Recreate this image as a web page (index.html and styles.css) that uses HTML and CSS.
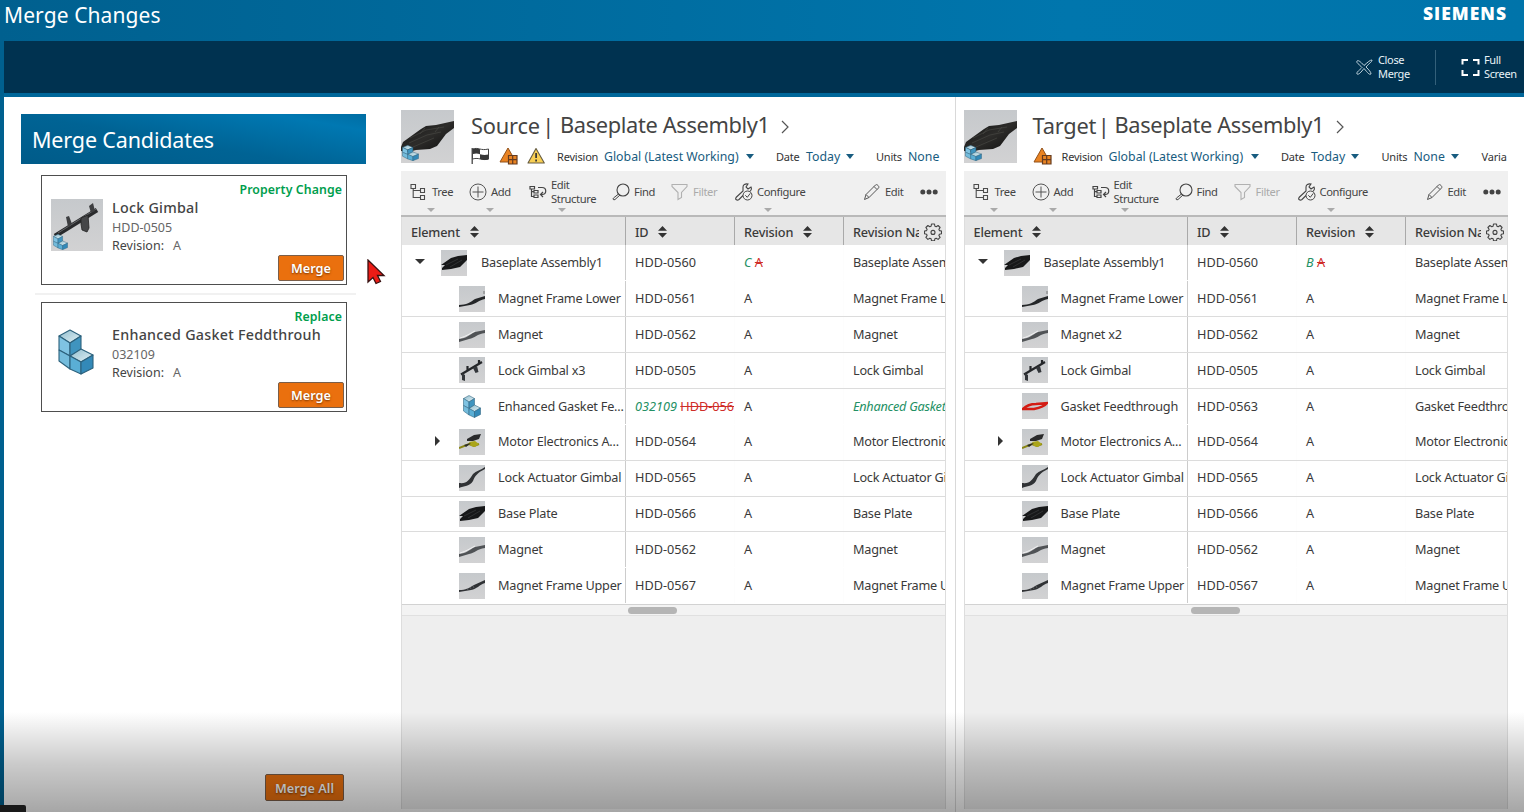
FILE: index.html
```html
<!DOCTYPE html>
<html lang="en">
<head>
<meta charset="utf-8">
<title>Merge Changes</title>
<link rel="stylesheet" href="styles.css">
</head>
<body>
<svg class="defs" width="0" height="0">
  <defs>
    <linearGradient id="ltop" x1="0" y1="0" x2="1" y2="1"><stop offset="0" stop-color="#8fbccd"/><stop offset="1" stop-color="#e3f2f6"/></linearGradient>
    <linearGradient id="plate" x1="0" y1="0" x2="1" y2="1"><stop offset="0" stop-color="#111"/><stop offset=".5" stop-color="#2d2c2a"/><stop offset="1" stop-color="#0c0c0c"/></linearGradient>
    <linearGradient id="shade" x1="0" y1="0" x2="0" y2="1"><stop offset="0" stop-color="#c6c9cc"/><stop offset="1" stop-color="#d2d2d3"/></linearGradient>
  </defs>
  <symbol id="cubes" viewBox="0 0 36 46"><g stroke="#2c617c" stroke-width="1.1" stroke-linejoin="round"><path fill="url(#ltop)" d="M1 7 12 1l11 6-11 7z"/><path fill="#7fc3e2" d="M1 7l11 7v13L1 21z"/><path fill="#3f94bf" d="M23 7l-11 7v13l11-6z"/><path fill="#74bcdc" d="M1 21l11 6v13L1 32z"/><path fill="url(#ltop)" d="M12 27l11-7 12 6-12 7z"/><path fill="#5aaed5" d="M12 27l11 6v12L12 40z"/><path fill="#3389b8" d="M35 26l-12 7v12l12-6z"/></g></symbol>
  <symbol id="plate-lg" viewBox="0 0 53 53"><path fill="url(#shade)" d="M0 0h53v53H0z"/><path fill="url(#plate)" d="M0 37 2 32 20 19 25 16l10-1 18-4v7l-8 6-9 12-7 3-14 1-8 2-7-1z"/><path d="M9 28l16-8 18-3M8 33l18-8 14-3M12 37l21-9M24 18l-5 6m19-7-4 5" stroke="#4b4b47" stroke-width=".6" fill="none"/><svg x="1" y="35" width="17" height="16" viewBox="0 0 36 46" preserveAspectRatio="none"><g class="mini"><use href="#cubes" width="36" height="46"/></g></svg></symbol>
  <symbol id="plate-sm" viewBox="0 0 26 26"><path fill="url(#shade)" d="M0 0h26v26H0z"/><path fill="#171819" d="M0 15 10 8l7-2 9-1v5l-7 7-9 2-9 1v-2l3-3z"/><path d="M5 15l12-6M9 17l12-7" stroke="#3b3c3e" stroke-width=".7"/></symbol>
  <symbol id="frame" viewBox="0 0 26 26"><path fill="url(#shade)" d="M0 0h26v26H0z"/><path fill="#242628" d="M0 19c7 0 12-3 16-6l10-3v3c-6 1-9 5-15 6l-11 2z"/><path d="M25 8V5" stroke="#555" stroke-width=".7"/></symbol>
  <symbol id="frame-up" viewBox="0 0 26 26"><path fill="url(#shade)" d="M0 0h26v26H0z"/><path fill="#303235" d="M0 17c7 0 10-2 15-5l11-5v3c-6 2-8 6-14 7l-12 2z"/><path d="M8 15l1 2m2-3l1 2m2-3l1 2" stroke="#77797b" stroke-width=".6"/></symbol>
  <symbol id="magnet" viewBox="0 0 26 26"><path fill="url(#shade)" d="M0 0h26v26H0z"/><path fill="#505356" d="M0 17c8-1 10-4 16-7l10-2v3c-8 1-10 5-16 6l-10 3z"/><path d="M1 16c7-2 9-4 15-7" stroke="#fff" stroke-width=".7" fill="none"/></symbol>
  <symbol id="gimbal" viewBox="0 0 26 26"><path fill="url(#shade)" d="M0 0h26v26H0z"/><g fill="none" stroke="#25272a" stroke-width="2.200"><path d="M2 17.500 23 5M8.500 14V9M20 6V3"/></g><path fill="#33363a" d="M3 16l3 2v6l-3-1zM14 11l4-2 1.500 6-3 1z"/></symbol>
  <symbol id="gimbal-lg" viewBox="0 0 52 52"><path fill="url(#shade)" d="M0 0h52v52H0z"/><path d="M4 37 46 11" stroke="#292a2c" stroke-width="4.500"/><path d="M7 34 45 10" stroke="#66686a" stroke-width="1"/><path fill="#3d3e40" d="M15 18l3-1 3 8-4 3zM38 7l4-3 2 8-4 2z"/><path fill="#454648" stroke="#222" stroke-width=".8" d="M30 19l7-3 1 13-2 4-5-2-1-6z"/><svg x="2" y="35" width="15" height="16" viewBox="0 0 36 46" preserveAspectRatio="none"><g class="mini"><use href="#cubes" width="36" height="46"/></g></svg></symbol>
  <symbol id="motor" viewBox="0 0 26 26"><path fill="url(#shade)" d="M0 0h26v26H0z"/><path d="M0 19l10-4 5 2 5-2" stroke="#898514" stroke-width="2" fill="none"/><path fill="#aaa51a" d="M10 13l6-1 4 3-4 3-4-1z"/><path fill="#292a2b" d="M8 10l7-4 7-1-2 5-6 2-6 0zM5 16l7-2-5 4z"/></symbol>
  <symbol id="actuator" viewBox="0 0 26 26"><path fill="url(#shade)" d="M0 0h26v26H0z"/><path fill="#303235" d="M0 18c8 1 10-3 14-9 3-3 8-4 12-7v2c-8 4-10 7-12 12-3 5-9 5-14 7z"/></symbol>
  <symbol id="gasket" viewBox="0 0 26 26"><path fill="url(#shade)" d="M0 0h26v26H0z"/><path d="M1 16c3-3 8-5 13-5l11-1c-3 4-8 5-13 6z" fill="none" stroke="#d31c14" stroke-width="2.5"/></symbol>
  <symbol id="cube-row" viewBox="0 0 26 26"><svg x="4" y="2" width="18" height="23" viewBox="0 0 36 46"><use href="#cubes" width="36" height="46"/></svg></symbol>
  <symbol id="tree" viewBox="0 0 18 18"><path d="M1 1.500h4.500v4H1zM10.500 5.500h4v4h-4zM10.500 12.500h4v4h-4zM3.200 5.500v9h7.300M3.200 7.500h7.300" fill="none" stroke="#4c4c4c" stroke-width="1.100"/></symbol>
  <symbol id="add" viewBox="0 0 18 18"><path d="M9 3.500v11M3.500 9h11" stroke="#555" stroke-width="1"/><circle cx="9" cy="9" r="8" fill="none" stroke="#555"/></symbol>
  <symbol id="structure" viewBox="0 0 18 18"><path d="M1 3.500h4.500V6H1zM5 7.500h4V10H5zM5 12h4v2.500H5zM2.500 6v7.500H5M2.500 8.700H5" fill="none" stroke="#444" stroke-width="1.200"/><path d="M9 4.500h4c5 0 5 7 0 7h-1.500m2.500-2.500-2.500 2.500 2.500 2.500" fill="none" stroke="#444" stroke-width="1.200"/></symbol>
  <symbol id="find" viewBox="0 0 18 18"><circle cx="11" cy="7" r="6" fill="none" stroke="#444" stroke-width="1.100"/><path d="M6.500 11l-5 4c-1 1 0 2.500 1.500 1.500l5-4.500" fill="none" stroke="#444"/></symbol>
  <symbol id="filter" viewBox="0 0 18 18"><path d="M1 1.500h15v2l-5.500 6v5l-3.500 2v-7L1 3.500z" fill="none" stroke="#b1b1b1" stroke-width="1.100"/></symbol>
  <symbol id="configure" viewBox="0 0 18 18"><path d="M1 14.500 8 8V4c0-2 2-3.500 5-3l-2 3 2 2 3-2c1 2 0 4-2 5M1 14.500c-1 2 1 3.500 3 2l4-4" fill="none" stroke="#444" stroke-width="1.100"/><circle cx="12.500" cy="12.500" r="4.500" fill="#f0f0f0" stroke="#444"/><path d="m10.300 12.300 2 2 3-4" fill="none" stroke="#444"/></symbol>
  <symbol id="pencil" viewBox="0 0 18 18"><path d="M1.500 16.500 3 11.500 12.500 2c1-1.500 4.500 1.500 3 3L6 14.500zM3 11.500l3 3m5-11 3 3" fill="none" stroke="#555"/></symbol>
  <symbol id="dots" viewBox="0 0 18 18"><circle cx="2.800" cy="9" r="2.500"/><circle cx="9" cy="9" r="2.500"/><circle cx="15.200" cy="9" r="2.500"/></symbol>
  <symbol id="flag" viewBox="0 0 19 18"><path d="M1.200 1v16" stroke="#444" stroke-width="1.300"/><path fill="#fff" stroke="#444" d="M1.500 2c6-2 8 2 16 0v10c-7 2-9-2-16 0z"/><path fill="#383838" d="M2 2c3-1 5-.5 7 .2v5C7 6.500 5 6 2 7zM9 7.200c3 .8 5 1 8.500.3v5c-3 .7-6 .5-8.500-.5z"/></symbol>
  <symbol id="violate" viewBox="0 0 19 18"><path fill="#e98322" stroke="#925018" d="M1 15 9 1l8 14z"/><path fill="#e98322" stroke="#663c20" stroke-width="1.200" d="M9.500 8.500h8.500V17H9.500zM13.700 8.500V17M9.500 12.700H18"/></symbol>
  <symbol id="warn" viewBox="0 0 19 18"><path fill="#f8cf54" stroke="#675d42" stroke-width="1.100" stroke-linejoin="round" d="M9 1.500 17.300 16H1z"/><path d="M9.100 6v5m0 1.500v2" stroke="#333" stroke-width="1.700"/></symbol>
  <symbol id="gear" viewBox="0 0 18 18"><path fill="none" stroke="#444" stroke-width="1.100" stroke-linejoin="round" d="M7.500 1h3l.4 2.200 1.300.5 1.900-1.200 2 2-1.200 1.900.5 1.200 2.100.4v2.800l-2.100.4-.5 1.300 1.200 1.900-2 2-1.900-1.200-1.300.5-.4 2.200h-3l-.4-2.200-1.300-.5-1.900 1.200-2-2 1.200-1.900-.5-1.300-2.100-.4V8l2.100-.4.5-1.200-1.200-1.900 2-2 1.900 1.200 1.300-.5z"/><circle cx="9" cy="9.400" r="2" fill="none" stroke="#444" stroke-width="1.100"/></symbol>
  <symbol id="sort" viewBox="0 0 9 12"><path fill="#333" d="M4.500 0 9 4.800H0zM0 7h9l-4.500 4.800z"/></symbol>
</svg>

<header class="banner"><h1>Merge Changes</h1><div class="brand">SIEMENS</div></header>
<nav class="commands">
  <button class="command close"><svg width="17" height="17" viewBox="0 0 17 17"><path d="M1 2c1-1 3 0 7 4.500C12 3 14 1 16 1c0 2-3 3.500-6 7 3 3 5 5 5 7-2 1-3-1-7-5.500C5 13 3 16 1 15c-1-2 3-4 5-6.500C3 5 0 4 1 2z" fill="none" stroke="#c0d3dd" stroke-width="1"/></svg><span>Close<br>Merge</span></button>
  <button class="command full"><svg width="19" height="19" viewBox="0 0 19 19"><path d="M1.500 6.500V2H7M12 2h5.500v4.500M17.500 12v5H12M7 17H1.500v-5" fill="none" stroke="#fff" stroke-width="2"/></svg><span>Full<br>Screen</span></button>
</nav>

<main class="workspace">
  <aside class="candidates">
    <h2>Merge Candidates</h2>
    <article class="card">
      <div class="kind">Property Change</div>
      <div class="item"><svg class="preview"><use href="#gimbal-lg"/></svg><div class="facts"><h3>Lock Gimbal</h3><p class="light">HDD-0505</p><p>Revision:<span class="light rev">A</span></p></div></div>
      <button class="merge">Merge</button>
    </article>
    <hr>
    <article class="card">
      <div class="kind replace">Replace</div>
      <div class="item"><svg class="preview cube"><use href="#cubes"/></svg><div class="facts"><h3 class="long">Enhanced Gasket Feddthrouh</h3><p class="light num">032109</p><p>Revision:<span class="light rev">A</span></p></div></div>
      <button class="merge">Merge</button>
    </article>
    <button class="merge all">Merge All</button>
  </aside>

  <section class="panel source">
    <header class="summary">
      <svg class="thumb"><use href="#plate-lg"/></svg>
      <div>
        <h2 class="title"><span class="side">Source |</span><span class="name">Baseplate Assembly1</span><svg width="8" height="14" viewBox="0 0 8 14"><path d="m1 1 6 6-6 6" fill="none" stroke="#555" stroke-width="1.200"/></svg></h2>
        <div class="context">
          <svg class="badge"><use href="#flag"/></svg><svg class="badge"><use href="#violate"/></svg><svg class="badge"><use href="#warn"/></svg>
          <span class="label">Revision</span><span class="value global">Global (Latest Working)</span><i class="caret"></i>
          <span class="label date">Date</span><span class="value today">Today</span><i class="caret"></i>
          <span class="label units">Units</span><span class="value none">None</span>
        </div>
      </div>
    </header>
    <div class="toolbar">
      <div class="tool menu-tree"><svg><use href="#tree"/></svg><span>Tree</span></div>
      <div class="tool menu-add"><svg><use href="#add"/></svg><span>Add</span></div>
      <div class="tool menu-edit"><svg><use href="#structure"/></svg><span>Edit<br>Structure</span></div>
      <div class="tool"><svg><use href="#find"/></svg><span>Find</span></div>
      <div class="tool off"><svg><use href="#filter"/></svg><span>Filter</span></div>
      <div class="tool menu-conf"><svg><use href="#configure"/></svg><span>Configure</span></div>
      <div class="tool"><svg><use href="#pencil"/></svg><span>Edit</span></div>
      <div class="tool"><svg class="dots"><use href="#dots"/></svg></div>
    </div>
    <div class="grid">
      <div class="row head"><div>Element<svg class="sort"><use href="#sort"/></svg></div><div>ID<svg class="sort"><use href="#sort"/></svg></div><div>Revision<svg class="sort"><use href="#sort"/></svg></div><div><span class="clip">Revision Name</span><svg class="gear"><use href="#gear"/></svg></div></div>
      <div class="row root bare"><div><i class="open"></i><svg><use href="#plate-sm"/></svg><span>Baseplate Assembly1</span></div><div>HDD-0560</div><div><ins>C</ins>&nbsp;<del>A</del></div><div>Baseplate Assembly1</div></div>
      <div class="row"><div><svg><use href="#frame"/></svg><span>Magnet Frame Lower</span></div><div>HDD-0561</div><div>A</div><div>Magnet Frame Lower</div></div>
      <div class="row"><div><svg><use href="#magnet"/></svg><span>Magnet</span></div><div>HDD-0562</div><div>A</div><div>Magnet</div></div>
      <div class="row"><div><svg><use href="#gimbal"/></svg><span>Lock Gimbal x3</span></div><div>HDD-0505</div><div>A</div><div>Lock Gimbal</div></div>
      <div class="row bare"><div><svg><use href="#cube-row"/></svg><span>Enhanced Gasket Fe...</span></div><div class="swap"><ins>032109</ins>&nbsp;<del>HDD-056</del></div><div>A</div><div><ins>Enhanced Gasket</ins></div></div>
      <div class="row"><div><i class="shut"></i><svg><use href="#motor"/></svg><span>Motor Electronics A...</span></div><div>HDD-0564</div><div>A</div><div>Motor Electronics</div></div>
      <div class="row"><div><svg><use href="#actuator"/></svg><span>Lock Actuator Gimbal</span></div><div>HDD-0565</div><div>A</div><div>Lock Actuator Gimbal</div></div>
      <div class="row"><div><svg><use href="#plate-sm"/></svg><span>Base Plate</span></div><div>HDD-0566</div><div>A</div><div>Base Plate</div></div>
      <div class="row bare"><div><svg><use href="#magnet"/></svg><span>Magnet</span></div><div>HDD-0562</div><div>A</div><div>Magnet</div></div>
      <div class="row bare"><div><svg><use href="#frame-up"/></svg><span>Magnet Frame Upper</span></div><div>HDD-0567</div><div>A</div><div>Magnet Frame Upper</div></div>
      <div class="scroll"><i></i></div>
    </div>
  </section>

  <section class="panel target">
    <header class="summary">
      <svg class="thumb"><use href="#plate-lg"/></svg>
      <div>
        <h2 class="title"><span class="side">Target |</span><span class="name">Baseplate Assembly1</span><svg width="8" height="14" viewBox="0 0 8 14"><path d="m1 1 6 6-6 6" fill="none" stroke="#555" stroke-width="1.200"/></svg></h2>
        <div class="context">
          <svg class="badge"><use href="#violate"/></svg>
          <span class="label">Revision</span><span class="value global">Global (Latest Working)</span><i class="caret"></i>
          <span class="label date">Date</span><span class="value today">Today</span><i class="caret"></i>
          <span class="label units">Units</span><span class="value none">None</span><i class="caret"></i>
          <span class="label varia">Varia</span>
        </div>
      </div>
    </header>
    <div class="toolbar">
      <div class="tool menu-tree"><svg><use href="#tree"/></svg><span>Tree</span></div>
      <div class="tool menu-add"><svg><use href="#add"/></svg><span>Add</span></div>
      <div class="tool menu-edit"><svg><use href="#structure"/></svg><span>Edit<br>Structure</span></div>
      <div class="tool"><svg><use href="#find"/></svg><span>Find</span></div>
      <div class="tool off"><svg><use href="#filter"/></svg><span>Filter</span></div>
      <div class="tool menu-conf"><svg><use href="#configure"/></svg><span>Configure</span></div>
      <div class="tool"><svg><use href="#pencil"/></svg><span>Edit</span></div>
      <div class="tool"><svg class="dots"><use href="#dots"/></svg></div>
    </div>
    <div class="grid">
      <div class="row head"><div>Element<svg class="sort"><use href="#sort"/></svg></div><div>ID<svg class="sort"><use href="#sort"/></svg></div><div>Revision<svg class="sort"><use href="#sort"/></svg></div><div><span class="clip">Revision Name</span><svg class="gear"><use href="#gear"/></svg></div></div>
      <div class="row root bare"><div><i class="open"></i><svg><use href="#plate-sm"/></svg><span>Baseplate Assembly1</span></div><div>HDD-0560</div><div><ins>B</ins>&nbsp;<del>A</del></div><div>Baseplate Assembly1</div></div>
      <div class="row"><div><svg><use href="#frame"/></svg><span>Magnet Frame Lower</span></div><div>HDD-0561</div><div>A</div><div>Magnet Frame Lower</div></div>
      <div class="row"><div><svg><use href="#magnet"/></svg><span>Magnet x2</span></div><div>HDD-0562</div><div>A</div><div>Magnet</div></div>
      <div class="row"><div><svg><use href="#gimbal"/></svg><span>Lock Gimbal</span></div><div>HDD-0505</div><div>A</div><div>Lock Gimbal</div></div>
      <div class="row bare"><div><svg><use href="#gasket"/></svg><span>Gasket Feedthrough</span></div><div>HDD-0563</div><div>A</div><div>Gasket Feedthrough</div></div>
      <div class="row"><div><i class="shut"></i><svg><use href="#motor"/></svg><span>Motor Electronics A...</span></div><div>HDD-0564</div><div>A</div><div>Motor Electronics</div></div>
      <div class="row"><div><svg><use href="#actuator"/></svg><span>Lock Actuator Gimbal</span></div><div>HDD-0565</div><div>A</div><div>Lock Actuator Gimbal</div></div>
      <div class="row"><div><svg><use href="#plate-sm"/></svg><span>Base Plate</span></div><div>HDD-0566</div><div>A</div><div>Base Plate</div></div>
      <div class="row bare"><div><svg><use href="#magnet"/></svg><span>Magnet</span></div><div>HDD-0562</div><div>A</div><div>Magnet</div></div>
      <div class="row bare"><div><svg><use href="#frame-up"/></svg><span>Magnet Frame Upper</span></div><div>HDD-0567</div><div>A</div><div>Magnet Frame Upper</div></div>
      <div class="scroll"><i></i></div>
    </div>
  </section>
</main>
<div class="fade"></div>
<div class="corner"></div>
<svg class="pointer" width="20" height="26" viewBox="0 0 20 26"><path d="M1 1v22l5-4.500 3 6 4.500-2-3-6H17z" fill="#eb1c16" stroke="#371010" stroke-width="1.300"/></svg>
</body>
</html>
```
FILE: styles.css
```css
* { box-sizing: border-box; }
body { margin: 0; width: 1524px; height: 812px; overflow: hidden; position: relative; background: #00608f; color: #444; font: 12.7px "Noto Sans", "Open Sans", sans-serif; display: flex; flex-direction: column; }
h1, h2, h3, p { margin: 0; font-weight: 400; }
button { font: inherit; border: 0; padding: 0; }
.defs { position: absolute; }
.banner { height: 41px; flex: none; display: flex; justify-content: space-between; padding: 0 17px 0 4px; background: linear-gradient(90deg, #00608f, #0076ad 70%, #0074aa); color: #fff; }
.banner h1 { font-size: 21px; line-height: 31px; letter-spacing: .1px; }
.brand { font: 800 17.500px/27px "Open Sans", sans-serif; letter-spacing: 1px; }
.commands { height: 56px; flex: none; margin-left: 4px; background: #003250; border-bottom: 4px solid #00679a; display: flex; justify-content: flex-end; align-items: center; color: #fff; }
.command { display: flex; align-items: center; text-align: left; background: none; color: #e8f2f7; font-size: 11px; line-height: 14px; letter-spacing: -.35px; }
.command.close { width: 80px; height: 35px; gap: 5px; border-right: 1px solid #33607a; }
.command.full { padding-left: 25px; width: 88px; gap: 4px; }
.workspace { flex: 1; margin-left: 4px; background: #fff; display: flex; min-height: 0; }

.candidates { width: 397px; flex: none; padding: 17px 0 11px 17px; display: flex; flex-direction: column; }
.candidates h2 { width: 345px; height: 50px; padding-left: 11px; color: #fff; font-size: 21.500px; line-height: 51px; letter-spacing: -.15px; background: linear-gradient(10deg, #005b89, #006394 45%, #0078b2 85%, #006da3); }
.card { width: 306px; height: 110px; margin: 11px 0 0 20px; border: 1px solid #4e4e4e; display: flex; flex-direction: column; padding: 4px 2px 2px 9px; }
.candidates hr { width: 321px; margin: 8px 0 0 14px; border: 0; border-top: 2px solid #f1f1f1; }
.candidates hr + .card { margin-top: 7px; }
.kind { text-align: right; color: #009e4d; font-weight: 600; font-size: 12.300px; line-height: 19px; padding-right: 2px; letter-spacing: .1px; }
.item { display: flex; gap: 9px; height: 56px; }
.preview { width: 52px; height: 52px; }
.preview.cube { height: 46px; width: 36px; margin: 3px 9px 0 7px; }
.facts { line-height: 17.500px; font-size: 12.500px; margin-top: -2px; }
.facts h3 { font-size: 14.300px; line-height: 22px; font-weight: 500; letter-spacing: .26px; }
.light { color: #666; }
.rev { margin-left: 9px; }
.merge { width: 66px; height: 26px; margin-left: auto; background: #ea700e; border: 1px solid #7a5e49; border-radius: 2px; color: #fff; font-weight: 600; font-size: 12.700px; text-shadow: 0 1px 2px #7a3500; }
.merge.all { width: 79px; height: 27px; margin: auto 57px 0 auto; }

.panel { display: flex; flex-direction: column; flex: none; }
.source { width: 545px; }
.target { width: 552.500px; margin-left: 9px; padding-left: 7.500px; border-left: 1px solid #d9d9d9; }
.summary { height: 74px; display: flex; padding-top: 13px; }
.summary > div { margin-left: 17px; }
.target .summary > div { margin-left: 16px; }
.thumb { width: 53px; height: 53px; flex: none; }
.title { display: flex; align-items: center; height: 30px; font-size: 21.800px; letter-spacing: -.35px; white-space: nowrap; }
.title .side { width: 89px; letter-spacing: -.2px; word-spacing: -3px; }
.title .name { width: 208px; margin-top: -2px; }
.title svg { margin: 3px 0 0 13px; }
.target .side { width: 82px; letter-spacing: -.2px; word-spacing: -4px; }
.context { display: flex; align-items: center; height: 32px; white-space: nowrap; }
.badge { width: 19px; height: 18px; margin-right: 9px; flex: none; }
.label { font-size: 11px; width: 47px; color: #333; flex: none; letter-spacing: -.2px; }
.badge + .label { margin-left: 2px; }
.target .badge + .label { margin-left: 1px; }
.value { color: #185c80; font-size: 12.300px; flex: none; }
.global { width: 142px; }
.date { width: 30px; margin-left: 22px; }
.today { width: 40px; }
.units { width: 32px; margin-left: 22px; }
.none { width: 37px; }
.target .date, .target .units { margin-left: 22.500px; }
.varia { width: 26px; margin-left: 23px; }
.caret { flex: none; border: 4.500px solid transparent; border-top: 5px solid #185c80; border-bottom: 0; }
.toolbar { height: 45.500px; background: #f0f0f0; border-bottom: 2px solid #b9b9b9; display: grid; grid-template-columns: 59px 60px 83px 59px 64px 128px 57px 20px; padding: 0 0 1px 9px; }
.tool { position: relative; display: flex; align-items: center; gap: 4px; font-size: 11.200px; line-height: 14px; letter-spacing: -.4px; color: #444; }
.tool svg { width: 18px; height: 18px; flex: none; }
.tool .dots { fill: #444; }
.tool.off { color: #aaa; }
.tool[class*="menu-"]::after { content: ""; position: absolute; bottom: 2px; border: 4px solid transparent; border-top: 4px solid #aaa; border-bottom: 0; }
.menu-tree::after, .menu-add::after { left: 17px; }
.menu-edit::after, .menu-conf::after { left: 29px; }
.grid { flex: none; height: 592px; background: #eee; border-right: 1px solid #ddd; border-left: 1px solid #ddd; }
.row { height: 35.900px; display: grid; grid-template-columns: 224px 109px 109px 1fr; background: #fff; border-bottom: 1px solid #dcdcdc; color: #3a3a3a; }
.target .row { grid-template-columns: 223.500px 109px 109px 1fr; }
.row.bare { border-bottom-color: #fff; }
.row > div { display: flex; align-items: center; padding: 0 0 1.500px 9px; border-right: 1px solid #fdfdfd; white-space: nowrap; overflow: hidden; min-width: 0; }
.row > div:first-child { padding: 0 0 0 57px; position: relative; border-right-color: #ccc; }
.row > div:last-child { border-right: 0; letter-spacing: -.25px; }
.row > div > svg:first-of-type { width: 26px; height: 26px; flex: none; }
.row span { margin-left: 13px; letter-spacing: -.22px; padding-bottom: 1.500px; }
.row.root > div:first-child { padding-left: 39px; }
.row.root > div:first-child span { margin-left: 14px; }
.row.head { height: 28.800px; background: #e6e6e6; border: 0; font-weight: 500; }
.row.head > div { padding: 2px 0 0 9px; border-right-color: #a9a9a9; letter-spacing: -.15px; }
.row.head > div > .sort:first-of-type { width: 9px; height: 12px; margin-left: 10px; }
.row.head .clip { width: 66px; margin: 0; padding: 0; overflow: hidden; letter-spacing: -.15px; }
.row.head > div > .gear:first-of-type { width: 18px; height: 18px; margin-left: 5px; }
.open, .shut { position: absolute; border: 5px solid transparent; }
.open { left: 13px; top: 14px; border-top-color: #333; border-bottom: 0; }
.shut { left: 33px; top: 11px; border-left-color: #333; border-right: 0; }
ins { color: #249064; text-decoration: none; font-style: italic; }
del { color: #cf2d28; }
.scroll { height: 12px; background: #f3f3f3; border-top: 1px solid #d2d2d2; border-bottom: 1px solid #e0e0e0; padding: 2px 0 0 226px; }
.scroll i { display: block; width: 49px; height: 7px; border-radius: 4px; background: #b5b5b5; }
.fade { position: absolute; left: 0; right: 0; bottom: 0; height: 100px; background: linear-gradient(#0000, #0003 50%, #00000059); pointer-events: none; }
.corner { position: absolute; left: 0; bottom: 0; width: 26px; height: 7px; background: #191919; border-top-right-radius: 2px; }
.pointer { position: absolute; left: 367px; top: 259px; }
```
